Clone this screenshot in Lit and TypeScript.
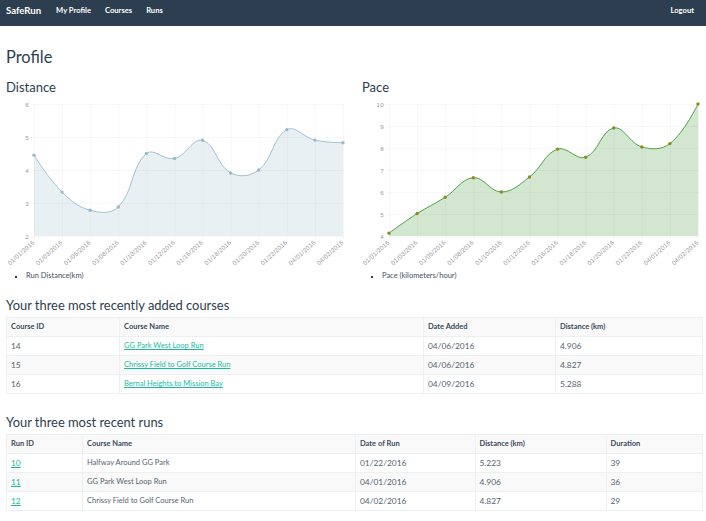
import { LitElement, html, css, svg } from "lit";
import { customElement } from "lit/decorators.js";

type Pt = [number, number];

const LABELS = ["01/01/2016","01/03/2016","01/05/2016","01/08/2016","01/10/2016","01/12/2016","01/16/2016","01/18/2016","01/20/2016","01/22/2016","04/01/2016","04/02/2016"];

function spline(pts: Pt[], t = 0.4): string {
  const n = pts.length;
  const ctl = pts.map((p, i) => {
    if (i === 0 || i === n - 1) return { i: p, o: p };
    const a = pts[i - 1], b = pts[i + 1];
    const d1 = Math.hypot(p[0] - a[0], p[1] - a[1]);
    const d2 = Math.hypot(b[0] - p[0], b[1] - p[1]);
    const fa = (t * d1) / (d1 + d2), fb = (t * d2) / (d1 + d2);
    return {
      i: [p[0] - fa * (b[0] - a[0]), p[1] - fa * (b[1] - a[1])] as Pt,
      o: [p[0] + fb * (b[0] - a[0]), p[1] + fb * (b[1] - a[1])] as Pt,
    };
  });
  let d = `M${pts[0][0]} ${pts[0][1]}`;
  for (let i = 1; i < n; i++) {
    d += ` C${ctl[i - 1].o[0]} ${ctl[i - 1].o[1]} ${ctl[i].i[0]} ${ctl[i].i[1]} ${pts[i][0]} ${pts[i][1]}`;
  }
  return d;
}

interface ChartCfg {
  x0: number; x1: number; min: number; max: number;
  values: number[]; fill: string; stroke: string; point: string; r: number;
}

function chart(c: ChartCfg) {
  const top = 7, bottom = 139; // plot area in svg coords
  const step = (c.x1 - c.x0) / 11;
  const xs = c.values.map((_, i) => c.x0 + i * step);
  const yOf = (v: number) => bottom - ((v - c.min) / (c.max - c.min)) * (bottom - top);
  const pts: Pt[] = c.values.map((v, i) => [xs[i], yOf(v)]);
  const line = spline(pts);
  const ticks: number[] = [];
  for (let v = c.min; v <= c.max; v++) ticks.push(v);
  const area = `${line} L${xs[11]} ${bottom} L${xs[0]} ${bottom} Z`;
  return html`<svg class="plot" width="350" height="168" viewBox="0 0 350 168">
    ${ticks.map((v) => svg`
      <line x1=${c.x0 - 3} x2=${c.x1 + 2} y1=${yOf(v) + 0.5} y2=${yOf(v) + 0.5} stroke="rgba(0,0,0,.03)"/>
      <text x=${c.x0 - 5} y=${yOf(v) + 2.5} text-anchor="end" class="tick">${v}</text>`)}
    ${xs.map((x, i) => svg`
      <line x1=${x + 0.5} x2=${x + 0.5} y1=${top} y2=${bottom + 3} stroke="rgba(0,0,0,.03)"/>
      <text class="tick date" text-anchor="end" transform="translate(${x + 1} ${bottom + 7}) rotate(-42)">${LABELS[i]}</text>`)}
    <path d=${area} fill=${c.fill}/>
    <path d=${line} fill="none" stroke=${c.stroke} stroke-width="0.9"/>
    ${pts.map((p) => svg`<circle cx=${p[0]} cy=${p[1]} r=${c.r} fill=${c.point}/>`)}
  </svg>`;
}

const COURSES = [
  ["14", "GG Park West Loop Run", "04/06/2016", "4.906"],
  ["15", "Chrissy Field to Golf Course Run", "04/06/2016", "4.827"],
  ["16", "Bernal Heights to Mission Bay", "04/09/2016", "5.288"],
];
const RUNS = [
  ["10", "Halfway Around GG Park", "01/22/2016", "5.223", "39"],
  ["11", "GG Park West Loop Run", "04/01/2016", "4.906", "36"],
  ["12", "Chrissy Field to Golf Course Run", "04/02/2016", "4.827", "29"],
];

@customElement("app-root")
export class AppRoot extends LitElement {
  static styles = css`
    :host { display: block; font-family: "Lato", "Liberation Sans", sans-serif; color: #2c3e50; background: #fff; min-height: 521px; }
    nav { height: 26px; background: #2c3e50; color: #fff; display: flex; align-items: center; padding: 0 12px 6px 6px; box-sizing: border-box; font-size: 7.6px; font-weight: 700; }
    .brand { font-size: 9.6px; margin-right: 15px; }
    .link { margin-right: 14px; }
    .logout { margin: 0 0 0 auto; }
    main { padding: 0 4px 0 6px; }
    h1, h2, h3 { margin: 0; font-weight: 400; }
    h1 { font-size: 16.4px; line-height: 20px; padding-top: 21px; }
    .charts { display: grid; grid-template-columns: 356px 350px; margin: 0 -4px 0 -6px; padding-top: 12px; }
    .chart { display: flex; flex-direction: column; }
    h2 { font-size: 13px; line-height: 16px; padding-left: 6px; }
    .plot { display: block; margin-top: 2px; }
    .tick { font: 6.2px "Liberation Sans", sans-serif; fill: #999; letter-spacing: 0.25px; }
    .legend { margin: 5px 0 0; padding: 0 0 0 26px; font-size: 7.5px; line-height: 12px; list-style: none; position: relative; color: #44525f; }
    .legend::before { content: ""; position: absolute; left: 15px; top: 6px; width: 2px; height: 2px; background: #2c3e50; }
    h3 { font-size: 12.9px; line-height: 16px; }
    .h-courses { margin-top: 15px; }
    .h-runs { margin-top: 20px; }
    table { border-collapse: collapse; table-layout: fixed; width: 696px; margin-top: 4px; font-size: 7.5px; }
    th, td { border: 1px solid #ecf0f1; padding: 0 4px; height: 19px; text-align: left; box-sizing: border-box; line-height: 10px; color: #55636f; font-weight: 400; }
    td.n { font-size: 8.4px; }
    th { font-weight: 700; color: #3a4a5a; font-size: 7.5px; }
    thead tr { background: #f9f9f9; }
    tbody tr:nth-child(even) { background: #f9f9f9; }
    a { color: #18bc9c; text-decoration: underline; }
    .c1 { width: 113px; } .c2 { width: 304px; } .c3 { width: 132px; } .c4 { width: 147px; }
    .r1 { width: 76px; } .r2 { width: 273px; } .r3 { width: 119.5px; } .r4 { width: 131px; } .r5 { width: 96.5px; }
  `;

  render() {
    return html`
      <nav>
        <span class="brand">SafeRun</span>
        <span class="link">My Profile</span>
        <span class="link">Courses</span>
        <span class="link">Runs</span>
        <span class="link logout">Logout</span>
      </nav>
      <main>
        <h1>Profile</h1>
        <div class="charts">
          <section class="chart">
            <h2>Distance</h2>
            ${chart({ x0: 34, x1: 343, min: 2, max: 6, values: [4.45, 3.33, 2.78, 2.88, 4.5, 4.35, 4.9, 3.91, 4.0, 5.223, 4.906, 4.827], fill: "rgba(151,187,205,0.22)", stroke: "#97bbcd", point: "#97bbcd", r: 1.7 })}
            <ul class="legend"><li>Run Distance(km)</li></ul>
          </section>
          <section class="chart">
            <h2>Pace</h2>
            ${chart({ x0: 33, x1: 342, min: 4, max: 10, values: [4.13, 5.02, 5.76, 6.65, 6, 6.68, 7.95, 7.58, 8.91, 8.05, 8.2, 10], fill: "rgba(30,130,20,0.2)", stroke: "#3f9a3a", point: "#8c8c1e", r: 1.7 })}
            <ul class="legend"><li>Pace (kilometers/hour)</li></ul>
          </section>
        </div>
        <h3 class="h-courses">Your three most recently added courses</h3>
        <table>
          <colgroup><col class="c1"/><col class="c2"/><col class="c3"/><col class="c4"/></colgroup>
          <thead><tr><th>Course ID</th><th>Course Name</th><th>Date Added</th><th>Distance (km)</th></tr></thead>
          <tbody>${COURSES.map((r) => html`<tr><td class="n">${r[0]}</td><td><a href="#">${r[1]}</a></td><td class="n">${r[2]}</td><td class="n">${r[3]}</td></tr>`)}</tbody>
        </table>
        <h3 class="h-runs">Your three most recent runs</h3>
        <table>
          <colgroup><col class="r1"/><col class="r2"/><col class="r3"/><col class="r4"/><col class="r5"/></colgroup>
          <thead><tr><th>Run ID</th><th>Course Name</th><th>Date of Run</th><th>Distance (km)</th><th>Duration</th></tr></thead>
          <tbody>${RUNS.map((r) => html`<tr><td class="n"><a href="#">${r[0]}</a></td><td>${r[1]}</td><td class="n">${r[2]}</td><td class="n">${r[3]}</td><td class="n">${r[4]}</td></tr>`)}</tbody>
        </table>
      </main>
    `;
  }
}
